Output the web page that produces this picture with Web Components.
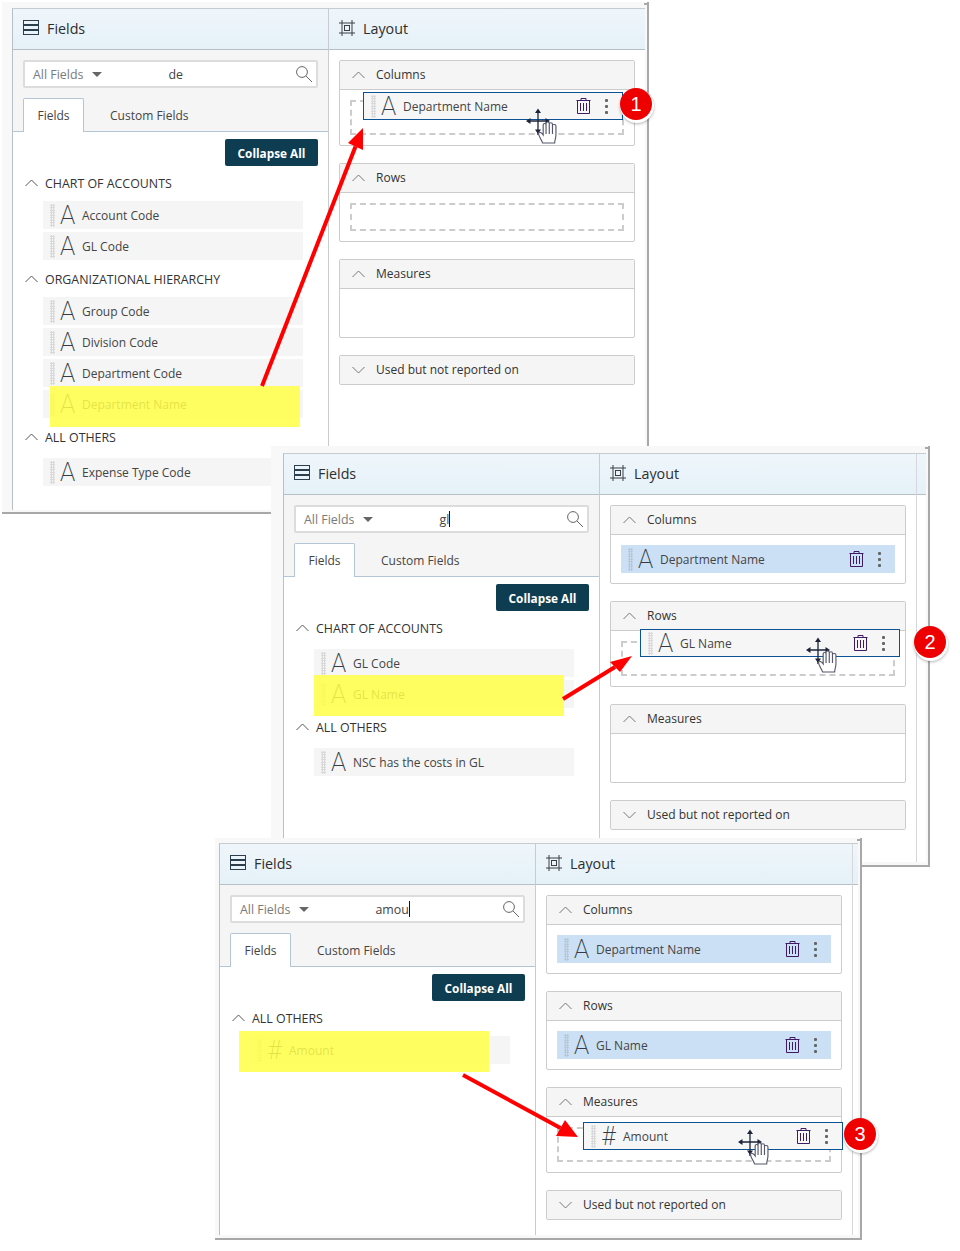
<!DOCTYPE html>
<html>
<head>
<meta charset="utf-8">
<title>Fields and Layout</title>
<style>
  body { margin: 0; background: #fff; font-family: 'Open Sans', 'Liberation Sans', sans-serif; font-size: 12px; color: #444; }
</style>
</head>
<body>
<guide-canvas>
  <report-window box="2,2,647,512" pad="6,2,2,10">
    <fields-pane slot="fields" query="de">
      <collapse-button></collapse-button>
      <field-group title="CHART OF ACCOUNTS">
        <field-row name="Account Code"></field-row>
        <field-row name="GL Code"></field-row>
      </field-group>
      <field-group title="ORGANIZATIONAL HIERARCHY">
        <field-row name="Group Code"></field-row>
        <field-row name="Division Code"></field-row>
        <field-row name="Department Code"></field-row>
        <field-row name="Department Name"></field-row>
      </field-group>
      <field-group title="ALL OTHERS" gap="9">
        <field-row name="Expense Type Code"></field-row>
      </field-group>
    </fields-pane>
    <layout-pane slot="layout">
      <drop-box title="Columns">
        <drop-zone tall>
          <field-row name="Department Name" kind="drag" style="left:11px;top:-10px"></field-row>
        </drop-zone>
      </drop-box>
      <drop-box title="Rows"><drop-zone></drop-zone></drop-box>
      <drop-box title="Measures"><drop-zone hidden-line></drop-zone></drop-box>
      <drop-box title="Used but not reported on" collapsed></drop-box>
    </layout-pane>
  </report-window>
  <marker-box box="50,386,250,41"></marker-box>
  <red-arrow tail="262,386" tip="363,128" wings="348,143 363,150"></red-arrow>
  <step-badge at="636,104">1</step-badge>
  <drag-cursor at="526,108"></drag-cursor>

  <report-window box="271,446,659,421" pad="7,2,3,12">
    <fields-pane slot="fields" query="gl" caret>
      <collapse-button></collapse-button>
      <field-group title="CHART OF ACCOUNTS" gap="9">
        <field-row name="GL Code"></field-row>
        <field-row name="GL Name"></field-row>
      </field-group>
      <field-group title="ALL OTHERS" gap="9">
        <field-row name="NSC has the costs in GL"></field-row>
      </field-group>
    </fields-pane>
    <layout-pane slot="layout" gutter="10">
      <drop-box title="Columns"><field-row name="Department Name" kind="picked"></field-row></drop-box>
      <drop-box title="Rows">
        <drop-zone tall>
          <field-row name="GL Name" kind="drag" style="left:17px;top:-14px"></field-row>
        </drop-zone>
      </drop-box>
      <drop-box title="Measures"><drop-zone hidden-line></drop-zone></drop-box>
      <drop-box title="Used but not reported on" collapsed></drop-box>
    </layout-pane>
  </report-window>
  <marker-box box="314,675,250,41"></marker-box>
  <red-arrow tail="563,699" tip="632,656" wings="610,662 620,672"></red-arrow>
  <step-badge at="930,642">2</step-badge>
  <drag-cursor at="806,637"></drag-cursor>

  <report-window box="215,838,647,402" pad="5,2,3,4">
    <fields-pane slot="fields" query="amou" caret>
      <collapse-button></collapse-button>
      <field-group title="ALL OTHERS">
        <field-row name="Amount" type="#"></field-row>
      </field-group>
    </fields-pane>
    <layout-pane slot="layout" gutter="6">
      <drop-box title="Columns"><field-row name="Department Name" kind="picked"></field-row></drop-box>
      <drop-box title="Rows"><field-row name="GL Name" kind="picked"></field-row></drop-box>
      <drop-box title="Measures">
        <drop-zone tall>
          <field-row name="Amount" type="#" kind="drag" style="left:24px;top:-7px"></field-row>
        </drop-zone>
      </drop-box>
      <drop-box title="Used but not reported on" collapsed></drop-box>
    </layout-pane>
  </report-window>
  <marker-box box="239,1031,250,41"></marker-box>
  <red-arrow tail="463,1075" tip="578,1137" wings="556,1136 565,1120"></red-arrow>
  <step-badge at="860,1134">3</step-badge>
  <drag-cursor at="738,1129"></drag-cursor>
</guide-canvas>

<script>
const chevron = (dir, color) => `
  <svg width="13" height="8" viewBox="0 0 13 8" fill="none" stroke="${color}" stroke-width="1">
    <path d="${dir === 'down' ? 'M.5 1L6.5 7L12.5 1' : 'M.5 7L6.5 1L12.5 7'}"/>
  </svg>`;

// places a canvas item from "x,y,w,h"
function placeBox(el, value) {
  const [x, y, w, h] = value.split(',').map(Number);
  el.style.left = x + 'px';
  el.style.top = y + 'px';
  el.style.width = w + 'px';
  el.style.height = h + 'px';
}

class GuideCanvas extends HTMLElement {
  constructor() {
    super();
    this.attachShadow({ mode: 'open' });
    this.shadowRoot.innerHTML = `
      <style>:host { display: block; position: relative; width: 960px; height: 1251px; overflow: hidden; }</style>
      <slot></slot>`;
  }
}

class ReportWindow extends HTMLElement {
  constructor() {
    super();
    this.attachShadow({ mode: 'open' });
    this.shadowRoot.innerHTML = `
      <style>
        :host { display: flex; position: absolute; box-sizing: border-box; background: #f8f8f8;
          border-right: 2px solid #a8a8a8; border-bottom: 2px solid #a8a8a8; }
        :host::after { content: ''; position: absolute; right: 0; top: 1px; width: 3px; height: 2px; background: #a8a8a8; }
        .inner { flex: 1; min-width: 0; display: flex; background: #fff;
          border-left: 1px solid #b9c0c5; border-top: 1px solid #c6ccd0; }
      </style>
      <div class="inner"><slot name="fields"></slot><slot name="layout"></slot></div>`;
  }

  connectedCallback() {
    placeBox(this, this.getAttribute('box'));
    const [t, r, b, l] = this.getAttribute('pad').split(',');
    this.style.padding = `${t}px ${r}px ${b}px ${l}px`;
  }
}

const headerTemplate = document.createElement('template');
headerTemplate.innerHTML = `
  <style>
    :host { display: flex; align-items: center; gap: 8px; box-sizing: border-box; height: 41px; padding: 0 0 2px 10px;
      background: linear-gradient(#eff6fb, #e5f1f8); border-bottom: 1px solid #b9c0c5;
      font: 500 14.3px 'Open Sans', sans-serif; color: #2e2e2e; }
    svg { display: block; flex: none; }
  </style>
  <slot name="icon"></slot><slot></slot>`;

class PaneHeader extends HTMLElement {
  constructor() {
    super();
    this.attachShadow({ mode: 'open' });
    this.shadowRoot.appendChild(headerTemplate.content.cloneNode(true));
  }
}

const fieldsTemplate = document.createElement('template');
fieldsTemplate.innerHTML = `
  <style>
    :host { display: flex; flex-direction: column; flex: none; width: 316px; box-sizing: border-box; border-right: 1px solid #c6ccd0; }
    .tools { background: #f5f5f5; padding: 10px 10px 0; border-bottom: 1px solid #b4c5d6; }
    .search { display: flex; align-items: center; box-sizing: border-box; height: 28px; padding: 0 4px 0 8px; background: #fff;
      border: 2px solid #dcdcdc; border-radius: 2px; color: #7a7a7a; font-size: 12.4px; }
    .caret { width: 0; height: 0; margin-left: 9px; border: 5px solid transparent; border-top-color: #666; border-bottom: 0; }
    .query { margin-left: 66px; color: #444; flex: 1; display: flex; align-items: center; }
    .query i { display: none; width: 1px; height: 16px; background: #111; }
    :host([caret]) .query i { display: block; }
    .tabs { display: flex; margin-top: 10px; height: 34px; margin-bottom: -1px; }
    .tab { display: flex; align-items: center; padding: 0 13px; color: #444; }
    .tab.on { background: #fff; border: 1px solid #b4c5d6; border-bottom: 0; border-radius: 2px 2px 0 0; padding: 0 13.5px; }
    .tab + .tab { margin-left: 13px; }
    .list { padding: 7px 25px 0 10px; }
    .list ::slotted(collapse-button) { margin: 0 -15px 5px auto; }
  </style>
  <pane-header>
    <svg slot="icon" width="16" height="16" viewBox="0 0 16 16" fill="none" stroke="#2c3e4c">
      <rect x=".5" y=".5" width="15" height="4"/><rect x=".5" y="5.5" width="15" height="4"/><rect x=".5" y="10.5" width="15" height="4"/>
    </svg>
    Fields
  </pane-header>
  <div class="tools">
    <div class="search">
      <span>All Fields</span><span class="caret"></span>
      <span class="query"><span class="text"></span><i></i></span>
      <svg width="16" height="16" viewBox="0 0 16 16" fill="none" stroke="#666"><circle cx="6" cy="6" r="5.4"/><path d="M10 10l6 6"/></svg>
    </div>
    <div class="tabs"><div class="tab on">Fields</div><div class="tab">Custom Fields</div></div>
  </div>
  <div class="list"><slot></slot></div>`;

class FieldsPane extends HTMLElement {
  constructor() {
    super();
    this.attachShadow({ mode: 'open' });
    this.shadowRoot.appendChild(fieldsTemplate.content.cloneNode(true));
  }

  connectedCallback() {
    this.shadowRoot.querySelector('.text').textContent = this.getAttribute('query');
  }
}

class CollapseButton extends HTMLElement {
  constructor() {
    super();
    this.attachShadow({ mode: 'open' });
    this.shadowRoot.innerHTML = `
      <style>
        :host { display: flex; align-items: center; justify-content: center; width: 93px; height: 27px; border-radius: 2px;
          background: #0e3d52; color: #fff; font-weight: 700; font-size: 11.8px; }
      </style>
      Collapse All`;
  }
}

class FieldGroup extends HTMLElement {
  constructor() {
    super();
    this.attachShadow({ mode: 'open' });
    this.shadowRoot.innerHTML = `
      <style>
        :host { display: block; margin-bottom: 7px; }
        .head { display: flex; align-items: center; gap: 7px; height: 24px; padding-left: 2px; color: #333; font-size: 12.4px; }
        .rows { display: flex; flex-direction: column; gap: 3px; margin-left: 20px; margin-top: 6px; }
      </style>
      <div class="head">${chevron('up', '#555')}<span class="title"></span></div>
      <div class="rows"><slot></slot></div>`;
  }

  connectedCallback() {
    this.shadowRoot.querySelector('.title').textContent = this.getAttribute('title');
    this.removeAttribute('title');
    if (this.hasAttribute('gap')) {
      this.shadowRoot.querySelector('.rows').style.marginTop = this.getAttribute('gap') + 'px';
    }
  }
}

const rowTemplate = document.createElement('template');
rowTemplate.innerHTML = `
  <style>
    :host { display: block; box-sizing: border-box; width: 260px; height: 28px; background: #f5f5f5; color: #444; }
    :host([kind="picked"]) { width: 274px; background: #cce0f5; }
    :host([kind="drag"]) { position: absolute; background: #f6f6f6; border: 1px solid #0b5394; }
    .row { display: flex; align-items: center; height: 100%; padding-left: 7px; }
    .grip { flex: none; width: 5px; height: 23px; background-image: radial-gradient(#d2d2d2 .9px, transparent 1.1px); background-size: 2.5px 2.5px; }
    :host([kind="picked"]) .grip { background-image: radial-gradient(#b3c2d1 .9px, transparent 1.1px); }
    .type { flex: none; width: 15px; margin: 2px 7px 0 5px; text-align: center; font: 200 25px/26px Roboto, sans-serif; color: #333c46; }
    .actions { display: none; align-items: center; margin-left: auto; padding-right: 14px; gap: 14px; }
    :host([kind]) .actions { display: flex; }
    .kebab { display: flex; flex-direction: column; gap: 3px; }
    .kebab b { display: block; width: 3px; height: 3px; background: #666; border-radius: 1px; }
    svg { display: block; }
  </style>
  <div class="row">
    <span class="grip"></span><span class="type"></span><span class="name"></span>
    <span class="actions">
      <svg width="15" height="16" viewBox="0 0 15 16" fill="none" stroke="#3e1b63">
        <path d="M5 2.5V.5h5v2M.5 2.5h14M1.5 2.5v13h12v-13M4.5 5v8M7.5 5v8M10.5 5v8"/>
      </svg>
      <span class="kebab"><b></b><b></b><b></b></span>
    </span>
  </div>`;

class FieldRow extends HTMLElement {
  constructor() {
    super();
    this.attachShadow({ mode: 'open' });
    this.shadowRoot.appendChild(rowTemplate.content.cloneNode(true));
  }

  connectedCallback() {
    this.shadowRoot.querySelector('.name').textContent = this.getAttribute('name');
    this.shadowRoot.querySelector('.type').textContent = this.getAttribute('type') || 'A';
  }
}

class LayoutPane extends HTMLElement {
  constructor() {
    super();
    this.attachShadow({ mode: 'open' });
    this.shadowRoot.innerHTML = `
      <style>
        :host { display: flex; flex: 1; min-width: 0; }
        .main { flex: 1; min-width: 0; }
        .boxes { display: flex; flex-direction: column; gap: 17px; padding: 10px; }
        .gutter { flex: none; box-sizing: border-box; border-left: 1px solid #d4d8da; }
        .gutter div { height: 41px; box-sizing: border-box; background: linear-gradient(#eff6fb, #e5f1f8); border-bottom: 1px solid #b9c0c5; }
      </style>
      <div class="main">
        <pane-header>
          <svg slot="icon" width="16" height="16" viewBox="0 0 16 16" fill="none" stroke="#3a3f44">
            <path d="M3 0v16M13 0v16M0 3h16M0 13h16"/><rect x="5.5" y="5.5" width="5" height="5"/>
          </svg>
          Layout
        </pane-header>
        <div class="boxes"><slot></slot></div>
      </div>
      <div class="gutter"><div></div></div>`;
  }

  connectedCallback() {
    const gutter = this.getAttribute('gutter');
    const el = this.shadowRoot.querySelector('.gutter');
    if (gutter) el.style.width = gutter + 'px'; else el.remove();
  }
}

class DropBox extends HTMLElement {
  constructor() {
    super();
    this.attachShadow({ mode: 'open' });
    this.shadowRoot.innerHTML = `
      <style>
        :host { display: block; border: 1px solid #ccc; border-radius: 2px; background: #fff; }
        .head { display: flex; align-items: center; gap: 11px; box-sizing: border-box; height: 28px; padding: 0 0 1px 12px; background: #f5f5f5; color: #333; }
        .body { padding: 10px; border-top: 1px solid #ccc; }
        :host([collapsed]) .body { display: none; }
      </style>
      <div class="head"><span class="chev"></span><span class="title"></span></div>
      <div class="body"><slot></slot></div>`;
  }

  connectedCallback() {
    const collapsed = this.hasAttribute('collapsed');
    this.shadowRoot.querySelector('.chev').innerHTML = chevron(collapsed ? 'down' : 'up', '#777');
    this.shadowRoot.querySelector('.title').textContent = this.getAttribute('title');
    this.removeAttribute('title');
  }
}

class DropZone extends HTMLElement {
  constructor() {
    super();
    this.attachShadow({ mode: 'open' });
    this.shadowRoot.innerHTML = `
      <style>
        :host { display: block; position: relative; box-sizing: border-box; height: 28px; border: 2px dashed #ccc; }
        :host([tall]) { height: 35px; }
        :host([hidden-line]) { border-color: transparent; }
      </style>
      <slot></slot>`;
  }
}

class MarkerBox extends HTMLElement {
  constructor() {
    super();
    this.attachShadow({ mode: 'open' });
    this.shadowRoot.innerHTML = `<style>:host { display: block; position: absolute; background: rgba(255, 255, 70, .85); }</style>`;
  }

  connectedCallback() {
    placeBox(this, this.getAttribute('box'));
  }
}

class RedArrow extends HTMLElement {
  constructor() {
    super();
    this.attachShadow({ mode: 'open' });
  }

  connectedCallback() {
    const [a, b] = [this.getAttribute('tail'), this.getAttribute('tip')];
    const [x1, y1] = a.split(',');
    const [w1, w2] = this.getAttribute('wings').split(' ').map(p => p.split(',').map(Number));
    const mid = [(w1[0] + w2[0]) / 2, (w1[1] + w2[1]) / 2];
    this.shadowRoot.innerHTML = `
      <style>:host { position: absolute; left: 0; top: 0; display: block; pointer-events: none; } svg { display: block; }</style>
      <svg width="960" height="1251" viewBox="0 0 960 1251">
        <line x1="${x1}" y1="${y1}" x2="${mid[0]}" y2="${mid[1]}" stroke="#f00" stroke-width="4"/>
        <polygon points="${b} ${w1} ${w2}" fill="#f00"/>
      </svg>`;
  }
}

class StepBadge extends HTMLElement {
  constructor() {
    super();
    this.attachShadow({ mode: 'open' });
    this.shadowRoot.innerHTML = `
      <style>
        :host { position: absolute; display: flex; align-items: center; justify-content: center; box-sizing: content-box; width: 32px; height: 32px;
          margin: -16px 0 0 -16px; border-radius: 50%; background: #ee0000; color: #fff;
          font: 20px/1 'Liberation Sans', sans-serif; box-shadow: 1px 2px 0 1px #fff, 1px 3px 3px 1px rgba(0,0,0,.3); }
      </style>
      <slot></slot>`;
  }

  connectedCallback() {
    const [x, y] = this.getAttribute('at').split(',');
    this.style.left = x + 'px';
    this.style.top = y + 'px';
  }
}

class DragCursor extends HTMLElement {
  constructor() {
    super();
    this.attachShadow({ mode: 'open' });
    this.shadowRoot.innerHTML = `
      <style>:host { position: absolute; display: block; width: 32px; height: 36px; } svg { display: block; }</style>
      <svg width="32" height="36" viewBox="0 0 32 36">
        <path d="M12 3v24M2 13h20" stroke="#1c2438" stroke-width="1.3" fill="none"/>
        <path d="M12 .5L9 5h6zM12 26l-3-4.5h6zM0 13l4.5-3v6zM24 13l-4.5-3v6z" fill="#1c2438"/>
        <g transform="translate(12 0) scale(1.15 1) translate(-12 0)">
          <path d="M16 35C15 31 12 28 12.5 25C13 23.5 15 24.5 16.5 27V17C16.5 15 19 15 19 17V15.5C19 13.6 21.8 13.6 21.8 15.5V16C21.8 14.4 24.6 14.4 24.6 16.4V17.5C24.6 16 27.6 16 27.6 18V27C27.6 30 26.5 32 26.5 35Z"
            fill="#fff" stroke="#55586a" stroke-width="1"/>
          <path d="M19 17v9M21.8 16v10M24.6 17v9" stroke="#55586a" stroke-width="1" fill="none"/>
        </g>
      </svg>`;
  }

  connectedCallback() {
    const [x, y] = this.getAttribute('at').split(',');
    this.style.left = x + 'px';
    this.style.top = y + 'px';
  }
}

customElements.define('guide-canvas', GuideCanvas);
customElements.define('report-window', ReportWindow);
customElements.define('pane-header', PaneHeader);
customElements.define('fields-pane', FieldsPane);
customElements.define('collapse-button', CollapseButton);
customElements.define('field-group', FieldGroup);
customElements.define('field-row', FieldRow);
customElements.define('layout-pane', LayoutPane);
customElements.define('drop-box', DropBox);
customElements.define('drop-zone', DropZone);
customElements.define('marker-box', MarkerBox);
customElements.define('red-arrow', RedArrow);
customElements.define('step-badge', StepBadge);
customElements.define('drag-cursor', DragCursor);
</script>
</body>
</html>
